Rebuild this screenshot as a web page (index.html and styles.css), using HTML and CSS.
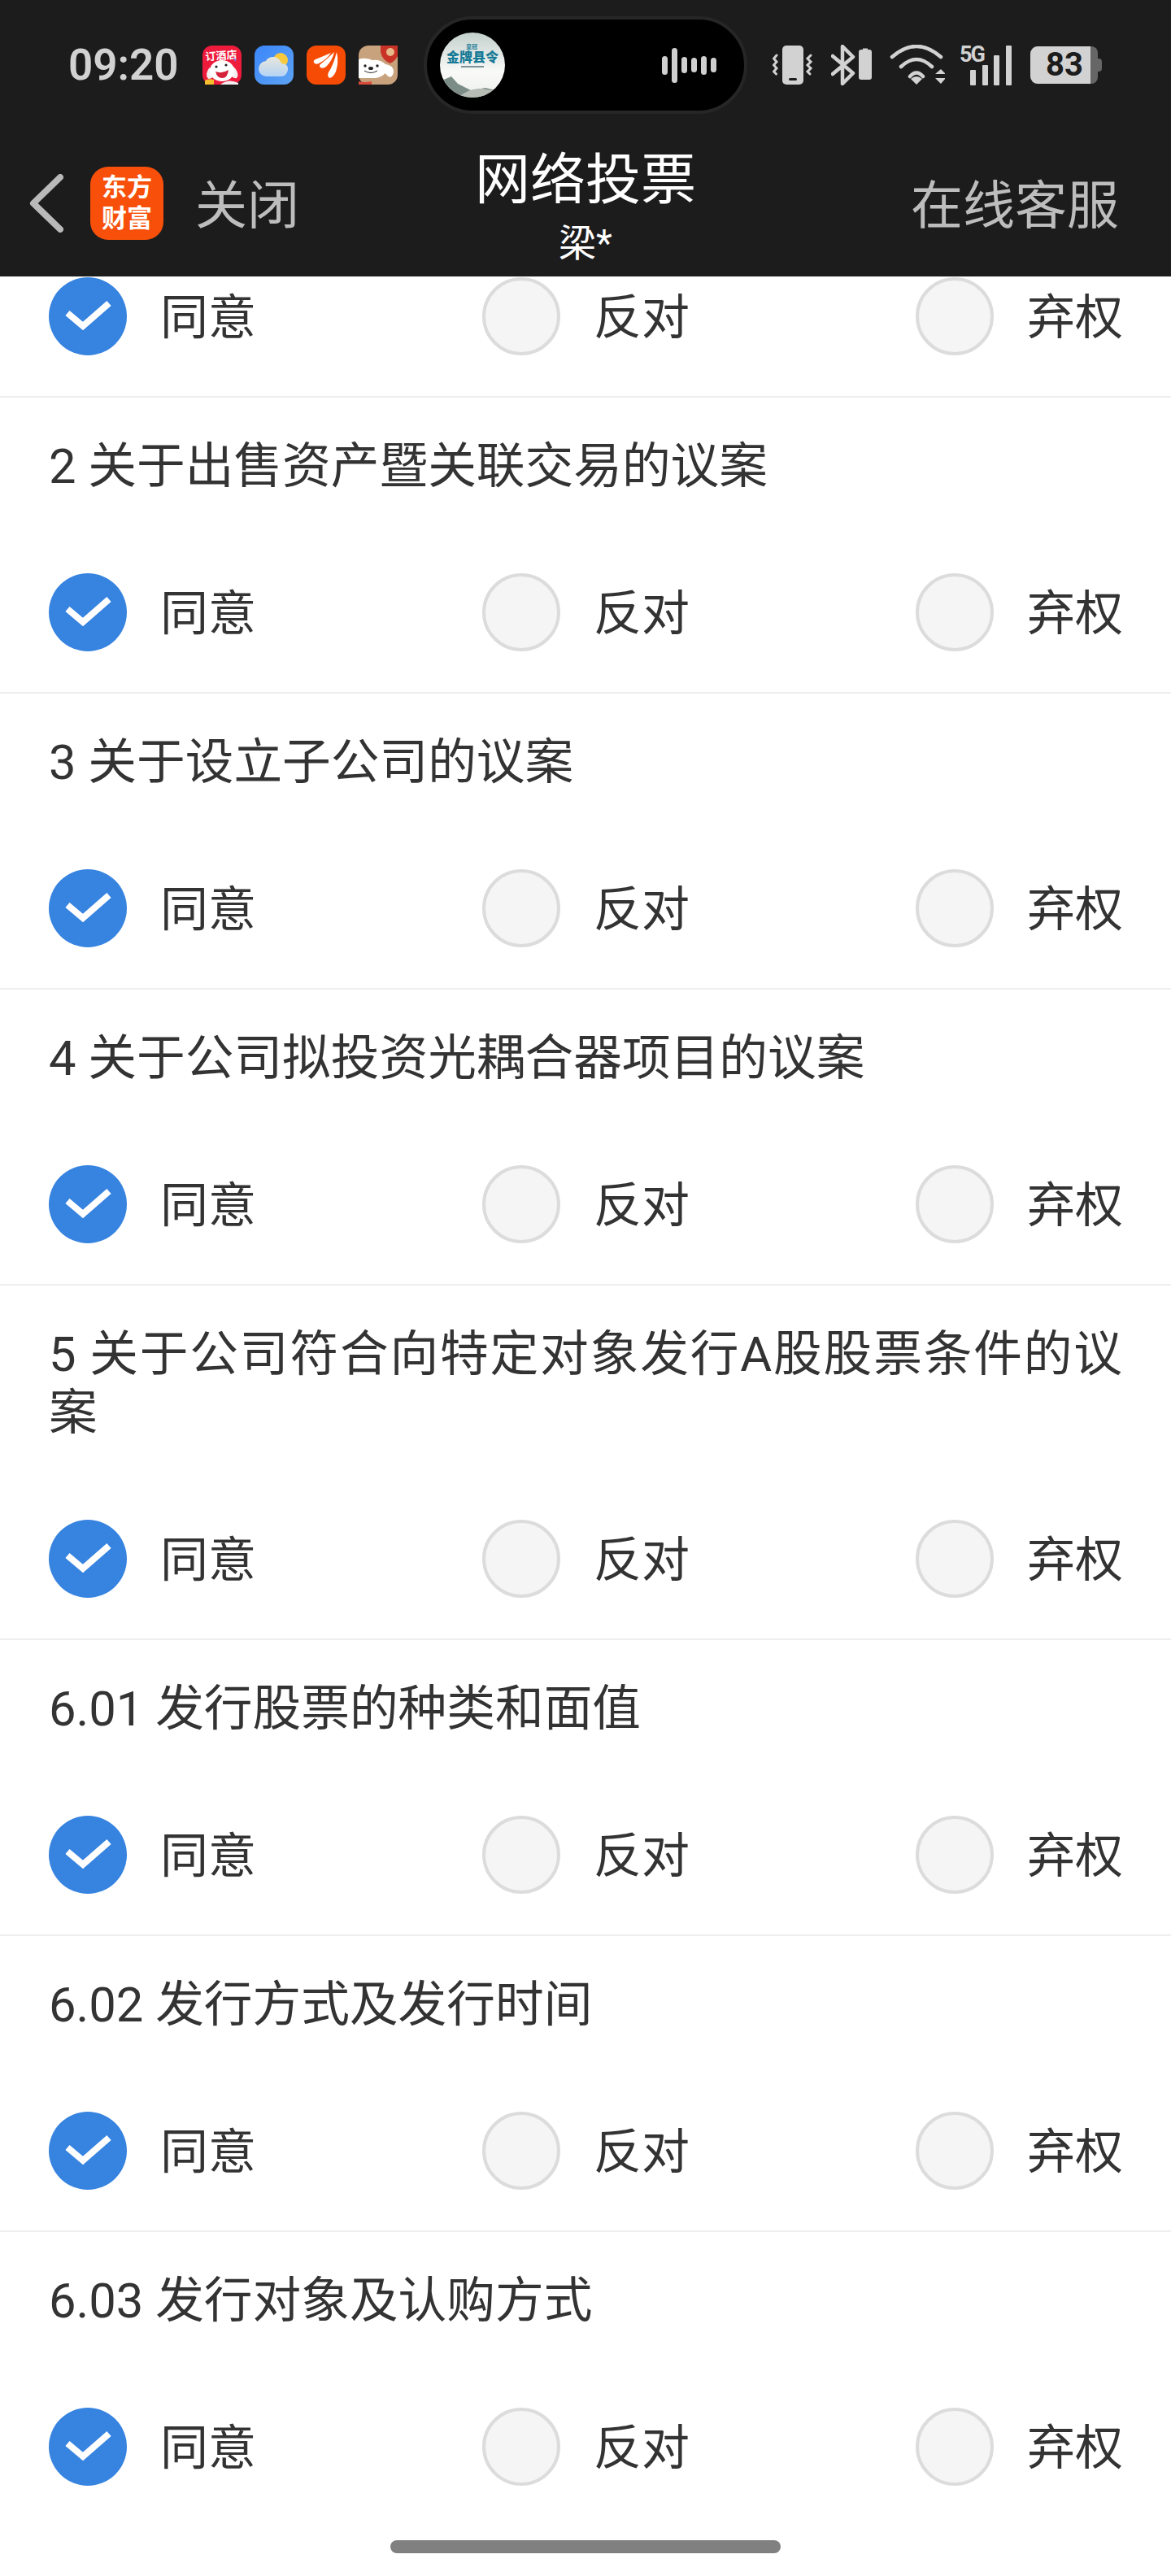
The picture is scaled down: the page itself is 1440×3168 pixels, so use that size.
FILE: index.html
```html
<!DOCTYPE html>
<html lang="zh-CN">

<head>
  <meta charset="UTF-8">
  <title>网络投票</title>
  <link rel="stylesheet" href="styles.css">
</head>

<body>
  <svg class="defs" width="0" height="0">
    <symbol id="check" viewBox="0 0 96 96">
      <polyline points="23,44 42,60 74,32" fill="none" stroke="#fff" stroke-width="8" />
    </symbol>
  </svg>

  <div class="top">
    <div class="status">
      <span class="time">09:20</span>
      <div class="apps">
        <svg class="app" viewBox="0 0 48 48">
          <rect width="48" height="48" rx="12" fill="#ee1b3c" />
          <text x="23" y="17" class="app-text" text-anchor="middle" transform="rotate(-4 24 14)">订酒店</text>
          <path d="M9 27c-5 5-5 13-1 14 3 0 6-3 7-6zM38 26c5 4 7 11 4 14-3 1-7-2-8-6z" fill="#f4f0f2" />
          <ellipse cx="24" cy="31" rx="15" ry="13" fill="#fff" />
          <path d="M16 32q8 3 16-2q-1 10-8 10q-6 0-8-8z" fill="#d5213a" />
          <circle cx="17" cy="26" r="1.6" fill="#222" />
          <circle cx="29" cy="24" r="1.6" fill="#222" />
          <path d="M3 48v-5q5-3 11-1v6z" fill="#f5bc2d" />
          <path d="M22 48q10-8 22-2v2z" fill="#f4eef2" />
          <path d="M38 15l4 2-2 3z" fill="#8a7bd8" />
        </svg>
        <svg class="app" viewBox="0 0 48 48">
          <defs>
            <linearGradient id="sky" x1="0" y1="0" x2="1" y2="1">
              <stop offset="0" stop-color="#3b86fa" />
              <stop offset="1" stop-color="#5da3f3" />
            </linearGradient>
            <linearGradient id="cloud" x1="0" y1="0" x2="0" y2="1">
              <stop offset="0" stop-color="#e8e6da" />
              <stop offset="1" stop-color="#b4d4f6" />
            </linearGradient>
          </defs>
          <rect width="48" height="48" rx="12" fill="url(#sky)" />
          <circle cx="32" cy="18" r="9" fill="#f7c93f" />
          <path d="M15 38a9.500 9.500 0 0 1-1-19c3-6 13-7 17-1 1 2 2 3 2 4 6 0 9 4 8 8-1 5-4 8-8 8z" fill="url(#cloud)" />
        </svg>
        <svg class="app" viewBox="0 0 48 48">
          <rect width="48" height="48" rx="12" fill="#f64b05" />
          <path d="M9 21q-1-3 2-4 10-4 19-8-5 8-15 13-4 2-6-1z" fill="#fff" />
          <path d="M17 27q-2-2 0-4 9-7 17-15-2 10-10 18-4 3-7 1z" fill="#fff" />
          <path d="M28 40q-3-3-1-7 6-9 10-25 3 12-1 24-3 7-8 8z" fill="#fff" />
        </svg>
        <svg class="app" viewBox="0 0 48 48">
          <rect width="48" height="48" rx="12" fill="#c8a27c" />
          <path d="M27 0h21v13q-3 6-9 9-10-4-12-14z" fill="#c93327" />
          <circle cx="39" cy="8" r="5" fill="#e8b98a" />
          <path d="M0 17q8-3 17 1 10-1 16 5 9 1 10 8 0 6-4 8-4-1-6-5-5 5-12 6h-21z" fill="#fff" />
          <path d="M0 44q8 2 16 0v4h-16z" fill="#d84a3c" />
          <circle cx="8" cy="25" r="1.700" fill="#222" />
          <circle cx="23" cy="25" r="1.700" fill="#222" />
          <ellipse cx="15" cy="28" rx="3" ry="2" fill="#222" />
          <path d="M7 31q8 5 16 0" fill="none" stroke="#333" stroke-width="1" />
        </svg>
      </div>
      <div class="pill">
        <svg class="avatar" viewBox="0 0 80 80">
          <defs>
            <clipPath id="round">
              <circle cx="40" cy="40" r="40" />
            </clipPath>
            <linearGradient id="mist" x1="0" y1="0" x2="0" y2="1">
              <stop offset="0" stop-color="#c3d0cc" />
              <stop offset="0.6" stop-color="#f9faf8" />
              <stop offset="1" stop-color="#eef0ee" />
            </linearGradient>
          </defs>
          <g clip-path="url(#round)">
            <rect width="80" height="80" fill="url(#mist)" />
            <path d="M0 60l14-6 8 9 16 8 18-3 24 6v6h-80z" fill="#7c8c86" />
            <path d="M22 80q14-12 30-11l28 5v6z" fill="#b7bcb5" />
            <rect x="26" y="41" width="28" height="2" fill="#7d9299" />
          </g>
          <text x="40" y="36" class="avatar-text" text-anchor="middle">金牌县令</text>
          <text x="39" y="20" class="avatar-small" text-anchor="middle">皇冠</text>
        </svg>
        <div class="wave">
          <i class="w1"></i><i class="w2"></i><i class="w3"></i><i class="w4"></i><i class="w1"></i><i class="w4"></i>
        </div>
      </div>
      <div class="sys">
        <svg class="ico" width="50" height="50" viewBox="0 0 50 50">
          <path d="M5 13l-3.500 4 3.500 4-3.500 4 3.500 4-3.500 4 3 3" fill="none" stroke="#d2d2d2" stroke-width="3" stroke-linecap="round" />
          <rect x="12" y="1" width="26" height="48" rx="5" fill="#d2d2d2" />
          <rect x="20" y="41" width="10" height="3" rx="1.500" fill="#1c1c1c" />
          <path d="M47 13l-4 4 4 4-4 4 4 4-4 4 3 3" fill="none" stroke="#d2d2d2" stroke-width="3" stroke-linecap="round" />
        </svg>
        <svg class="ico" width="50" height="50" viewBox="0 0 50 50">
          <path d="M2 36l25-21-13-13v46l13-13-25-21" fill="none" stroke="#d2d2d2" stroke-width="4.500" stroke-linejoin="round" stroke-linecap="round" />
          <path d="M37 6h2v-1.500h6v1.500h2q3 0 3 3v31q0 3-3 3h-10q-3 0-3-3v-31q0-3 3-3z" fill="#d2d2d2" />
        </svg>
        <svg class="ico" width="68" height="50" viewBox="0 0 68 50">
          <path d="M3 16q30-26 60 0M14 28q19-18 38 0M25 40q8-9 16 0" fill="none" stroke="#d2d2d2" stroke-width="4.500" stroke-linecap="round" transform="translate(0 -1)" />
          <path d="M26 42q7-6 14 0l-7 7z" fill="#d2d2d2" />
          <path d="M56 36l7-6 6 6zM56 41h13l-6 7z" fill="#d2d2d2" />
        </svg>
        <svg class="ico signal" width="65" height="50" viewBox="0 0 65 50">
          <text x="0" y="21" class="five-g">5G</text>
          <rect x="13" y="31" width="7" height="19" rx="1" fill="#d2d2d2" />
          <rect x="28" y="25" width="7" height="25" rx="1" fill="#d2d2d2" />
          <rect x="42" y="13" width="7" height="37" rx="1" fill="#d2d2d2" />
          <rect x="57" y="1" width="7" height="49" rx="1" fill="#d2d2d2" />
        </svg>
        <div class="battery">
          <span class="level">83</span>
          <span class="empty"></span>
          <span class="nub"></span>
        </div>
      </div>
    </div>

    <div class="nav">
      <div class="nav-left">
        <svg class="back" width="42" height="72" viewBox="0 0 42 72">
          <polyline points="38,4 5,36 38,68" fill="none" stroke="#b9b9b9" stroke-width="8" stroke-linejoin="round" stroke-linecap="round" />
        </svg>
        <div class="logo">东方<br>财富</div>
        <span class="nav-link close">关闭</span>
      </div>
      <div class="nav-title">
        <div class="title">网络投票</div>
        <div class="sub">梁*</div>
      </div>
      <div class="nav-right">
        <span class="nav-link">在线客服</span>
      </div>
    </div>
  </div>

  <div class="list">
    <div class="item first">
      <div class="opts">
        <div class="opt"><span class="radio on"><svg><use href="#check" /></svg></span>同意</div>
        <div class="opt"><span class="radio"></span>反对</div>
        <div class="opt"><span class="radio"></span>弃权</div>
      </div>
    </div>
    <div class="item">
      <p class="name">2 关于出售资产暨关联交易的议案</p>
      <div class="opts">
        <div class="opt"><span class="radio on"><svg><use href="#check" /></svg></span>同意</div>
        <div class="opt"><span class="radio"></span>反对</div>
        <div class="opt"><span class="radio"></span>弃权</div>
      </div>
    </div>
    <div class="item">
      <p class="name">3 关于设立子公司的议案</p>
      <div class="opts">
        <div class="opt"><span class="radio on"><svg><use href="#check" /></svg></span>同意</div>
        <div class="opt"><span class="radio"></span>反对</div>
        <div class="opt"><span class="radio"></span>弃权</div>
      </div>
    </div>
    <div class="item">
      <p class="name">4 关于公司拟投资光耦合器项目的议案</p>
      <div class="opts">
        <div class="opt"><span class="radio on"><svg><use href="#check" /></svg></span>同意</div>
        <div class="opt"><span class="radio"></span>反对</div>
        <div class="opt"><span class="radio"></span>弃权</div>
      </div>
    </div>
    <div class="item">
      <p class="name">5 关于公司符合向特定对象发行A股股票条件的议案</p>
      <div class="opts">
        <div class="opt"><span class="radio on"><svg><use href="#check" /></svg></span>同意</div>
        <div class="opt"><span class="radio"></span>反对</div>
        <div class="opt"><span class="radio"></span>弃权</div>
      </div>
    </div>
    <div class="item">
      <p class="name">6.01 发行股票的种类和面值</p>
      <div class="opts">
        <div class="opt"><span class="radio on"><svg><use href="#check" /></svg></span>同意</div>
        <div class="opt"><span class="radio"></span>反对</div>
        <div class="opt"><span class="radio"></span>弃权</div>
      </div>
    </div>
    <div class="item">
      <p class="name">6.02 发行方式及发行时间</p>
      <div class="opts">
        <div class="opt"><span class="radio on"><svg><use href="#check" /></svg></span>同意</div>
        <div class="opt"><span class="radio"></span>反对</div>
        <div class="opt"><span class="radio"></span>弃权</div>
      </div>
    </div>
    <div class="item last">
      <p class="name">6.03 发行对象及认购方式</p>
      <div class="opts">
        <div class="opt"><span class="radio on"><svg><use href="#check" /></svg></span>同意</div>
        <div class="opt"><span class="radio"></span>反对</div>
        <div class="opt"><span class="radio"></span>弃权</div>
      </div>
    </div>
  </div>

  <div class="home-bar"></div>
</body>

</html>
```

FILE: styles.css
```css
html,
body,
p {
  margin: 0;
  padding: 0;
}

body {
  position: relative;
  width: 1440px;
  height: 3168px;
  overflow: hidden;
  background: #fff;
  color: #333;
  font-family: Roboto, "Noto Sans CJK SC", sans-serif;
}

.defs {
  display: block;
  height: 0;
}

/* dark header */
.top {
  background: #1c1c1c;
  height: 340px;
}

.status {
  display: flex;
  align-items: center;
  height: 160px;
  padding-left: 84px;
}

.time {
  width: 131px;
  color: #d2d2d2;
  font-size: 53px;
  font-weight: 600;
  white-space: nowrap;
}

.apps {
  display: flex;
  gap: 16px;
  margin-left: 34px;
}

.app {
  display: block;
  width: 48px;
  height: 48px;
}

.app-text {
  fill: #fff;
  font-size: 13px;
  font-weight: 700;
}

.pill {
  display: flex;
  align-items: center;
  justify-content: space-between;
  box-sizing: border-box;
  width: 398px;
  height: 120px;
  margin-left: 32px;
  padding: 0 34px 0 16px;
  background: #000;
  border: 4px solid #262626;
  border-radius: 60px;
}

.avatar {
  display: block;
  width: 80px;
  height: 80px;
}

.avatar-text {
  fill: #177a96;
  font-size: 16px;
  font-weight: 900;
}

.avatar-small {
  fill: #177a96;
  font-size: 7px;
  font-weight: 700;
}

.wave {
  display: flex;
  align-items: center;
  gap: 5px;
}

.wave i {
  display: block;
  width: 7px;
  background: #d0d0d0;
  border-radius: 4px;
}

.wave .w1 {
  height: 23px;
}

.wave .w2 {
  height: 43px;
}

.wave .w3 {
  height: 20px;
}

.wave .w4 {
  height: 18px;
}

.sys {
  display: flex;
  align-items: center;
  gap: 22px;
  margin-left: 31px;
}

.ico {
  display: block;
}

.signal {
  margin-left: -4px;
}

.five-g {
  fill: #d2d2d2;
  font-size: 27px;
  font-weight: 700;
  letter-spacing: -2px;
}

.battery {
  display: flex;
  align-items: center;
  height: 46px;
}

.level {
  box-sizing: border-box;
  width: 74px;
  height: 46px;
  padding-left: 10px;
  background: #d2d2d2;
  border-radius: 9px 0 0 9px;
  color: #1c1c1c;
  font-size: 40px;
  font-weight: 700;
  line-height: 46px;
  text-align: center;
}

.empty {
  width: 9px;
  height: 46px;
  background: #666;
  border-radius: 0 8px 8px 0;
}

.nub {
  width: 5px;
  height: 16px;
  background: #666;
  border-radius: 0 4px 4px 0;
}

.nav {
  display: grid;
  grid-template-columns: 1fr auto 1fr;
  align-items: center;
  height: 180px;
}

.nav-left {
  display: flex;
  align-items: center;
  padding-left: 36px;
}

.back {
  display: block;
}

.logo {
  width: 90px;
  height: 90px;
  margin-left: 33px;
  background: #f8500a;
  border-radius: 22px;
  color: #fff;
  font-size: 31px;
  font-weight: 700;
  line-height: 38px;
  padding-top: 7px;
  box-sizing: border-box;
  text-align: center;
}

.nav-link {
  padding-top: 8px;
  color: #bdbdbd;
  font-size: 64px;
  line-height: 80px;
  white-space: nowrap;
}

.close {
  margin-left: 39px;
}

.nav-right {
  display: flex;
  justify-content: flex-end;
  padding-right: 64px;
}

.nav-title {
  padding-top: 8px;
  text-align: center;
  color: #fff;
}

.title {
  font-size: 68px;
  line-height: 80px;
}

.sub {
  font-size: 46px;
  line-height: 56px;
  margin-top: 9px;
}

/* vote rows */
.item {
  padding: 49px 0 50px;
  border-bottom: 2px solid #eee;
}

.item.first {
  padding-top: 1px;
}

.item.last {
  border-bottom: 0;
}

/* long names wrap and stretch to both edges */
.name {
  padding: 0 60px;
  font-size: 59.700px;
  line-height: 72px;
  text-align: justify;
}

.opts {
  display: grid;
  grid-template-columns: 533px 533px 1fr;
  margin-top: 95px;
  padding-left: 60px;
}

.item.first .opts {
  margin-top: 0;
}

.opt {
  display: flex;
  align-items: flex-start;
  gap: 41px;
  height: 96px;
  font-size: 59px;
  line-height: 99px;
}

.radio {
  display: block;
  box-sizing: border-box;
  width: 96px;
  height: 96px;
  background: #f5f5f5;
  border: 4px solid #dcdcdc;
  border-radius: 50%;
}

.radio.on {
  background: #3683e0;
  border: 0;
}

.radio svg {
  display: block;
  width: 96px;
  height: 96px;
}

.home-bar {
  position: absolute;
  left: 480px;
  top: 3124px;
  width: 480px;
  height: 16px;
  background: #808080;
  border-radius: 8px;
}
```
